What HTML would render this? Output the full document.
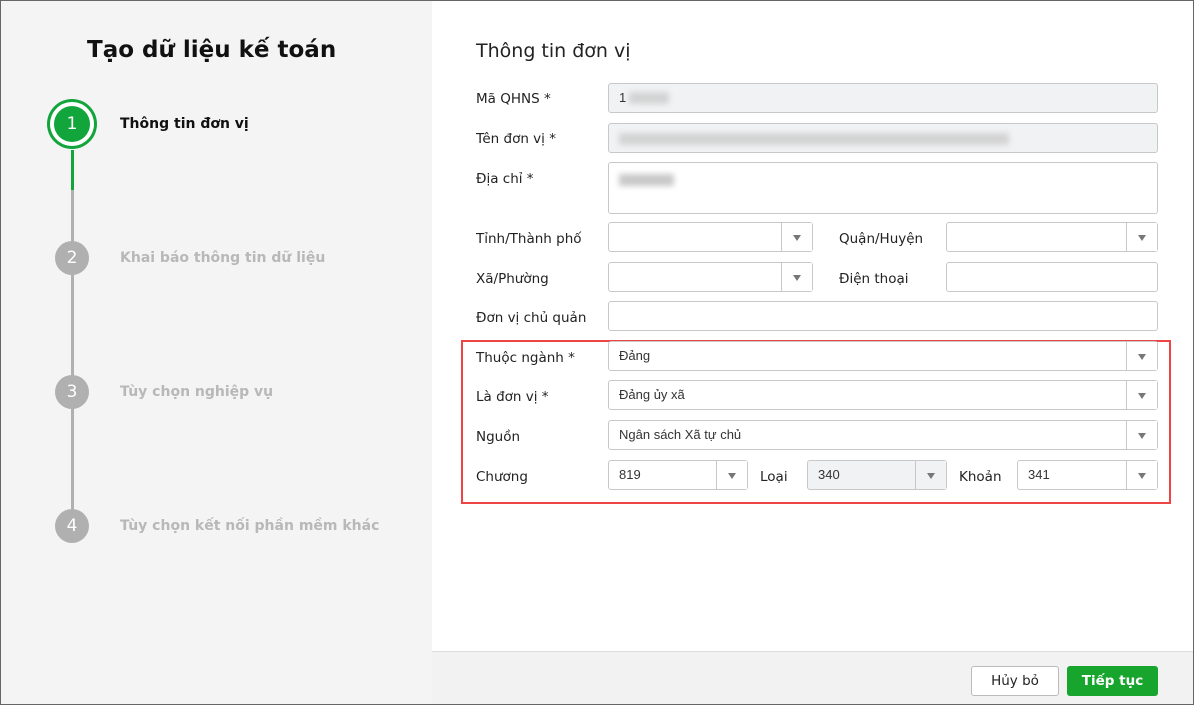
<!DOCTYPE html>
<html><head><meta charset="utf-8"><style>
*{box-sizing:border-box;margin:0;padding:0}
body{width:1194px;height:705px;overflow:hidden;font-family:"DejaVu Sans","Liberation Sans",sans-serif;background:#fff;position:relative}
.frame{position:absolute;left:0;top:0;width:1194px;height:705px;border:1px solid #666;z-index:10;pointer-events:none}
.left{position:absolute;left:0;top:0;width:432px;height:705px;background:#f4f4f4}
.a{position:absolute}
.title{left:87px;top:37px;font-size:23px;font-weight:bold;color:#111}
.c{position:absolute;border-radius:50%;color:#fff;text-align:center;font-size:17px}
.g{width:34px;height:34px;line-height:34px;background:#b0b0b0}
.st{position:absolute;left:120px;font-size:14px;font-weight:bold;color:#b8b8b8}
.lb{position:absolute;left:476px;font-size:13.5px;color:#222}
.in{position:absolute;border:1px solid #c8c8c8;border-radius:3px;background:#fff;font-size:13px;color:#333;padding:0 10px;line-height:28px;height:30px;font-family:"Liberation Sans",sans-serif}
.ro{background:#f1f2f4}
.dd::after{content:"";position:absolute;right:0;top:0;width:30px;height:28px;border-left:1px solid #c8c8c8;background:#fff}
.dd i{position:absolute;right:11px;top:12px;border-left:4px solid transparent;border-right:4px solid transparent;border-top:6px solid #777;z-index:2}
.ro.dd::after{background:#f1f2f4}
.blur{position:absolute;height:12px;background:#ccc;filter:blur(3px);opacity:.8}
</style></head><body>
<div class="frame"></div>
<div class="left"></div>
<div class="a title">Tạo dữ liệu kế toán</div>
<div class="a" style="left:71px;top:150px;width:3px;height:40px;background:#12a53c"></div>
<div class="a" style="left:71px;top:190px;width:3px;height:336px;background:#b0b0b0"></div>
<div class="c" style="left:47px;top:99px;width:50px;height:50px;background:#12a53c;"></div>
<div class="c" style="left:50px;top:102px;width:44px;height:44px;background:#fff"></div>
<div class="c" style="left:54px;top:106px;width:36px;height:36px;line-height:36px;background:#12a53c">1</div>
<div class="st" style="top:116px;color:#111">Thông tin đơn vị</div>
<div class="c g" style="left:55px;top:241px">2</div>
<div class="st" style="top:250px">Khai báo thông tin dữ liệu</div>
<div class="c g" style="left:55px;top:375px">3</div>
<div class="st" style="top:384px">Tùy chọn nghiệp vụ</div>
<div class="c g" style="left:55px;top:509px">4</div>
<div class="st" style="top:518px">Tùy chọn kết nối phần mềm khác</div>

<div class="a" style="left:476px;top:40px;font-size:19px;color:#222">Thông tin đơn vị</div>

<div class="lb" style="top:91px">Mã QHNS *</div>
<div class="in ro" style="left:608px;top:83px;width:550px">1<span class="blur" style="left:20px;top:8px;width:40px"></span></div>
<div class="lb" style="top:131px">Tên đơn vị *</div>
<div class="in ro" style="left:608px;top:123px;width:550px"><span class="blur" style="left:10px;top:9px;width:390px"></span></div>
<div class="lb" style="top:171px">Địa chỉ *</div>
<div class="in" style="left:608px;top:162px;width:550px;height:52px"><span class="blur" style="left:10px;top:11px;width:55px;background:#bbb"></span></div>
<div class="lb" style="top:231px">Tỉnh/Thành phố</div>
<div class="in dd" style="left:608px;top:222px;width:205px"><i></i></div>
<div class="lb" style="left:839px;top:231px">Quận/Huyện</div>
<div class="in dd" style="left:946px;top:222px;width:212px"><i></i></div>
<div class="lb" style="top:271px">Xã/Phường</div>
<div class="in dd" style="left:608px;top:262px;width:205px"><i></i></div>
<div class="lb" style="left:839px;top:271px">Điện thoại</div>
<div class="in" style="left:946px;top:262px;width:212px"></div>
<div class="lb" style="top:310px">Đơn vị chủ quản</div>
<div class="in" style="left:608px;top:301px;width:550px"></div>

<div class="a" style="left:461px;top:340px;width:710px;height:164px;border:2px solid #ef4444"></div>
<div class="lb" style="top:350px">Thuộc ngành *</div>
<div class="in dd" style="left:608px;top:341px;width:550px">Đảng<i></i></div>
<div class="lb" style="top:389px">Là đơn vị *</div>
<div class="in dd" style="left:608px;top:380px;width:550px">Đảng ủy xã<i></i></div>
<div class="lb" style="top:429px">Nguồn</div>
<div class="in dd" style="left:608px;top:420px;width:550px">Ngân sách Xã tự chủ<i></i></div>
<div class="lb" style="top:469px">Chương</div>
<div class="in dd" style="left:608px;top:460px;width:140px">819<i></i></div>
<div class="lb" style="left:760px;top:469px">Loại</div>
<div class="in dd ro" style="left:807px;top:460px;width:140px">340<i></i></div>
<div class="lb" style="left:959px;top:469px">Khoản</div>
<div class="in dd" style="left:1017px;top:460px;width:141px">341<i></i></div>

<div class="a" style="left:432px;top:651px;width:762px;height:54px;background:#f2f2f2;border-top:1px solid #ddd"></div>
<div class="a" style="left:971px;top:666px;width:88px;height:30px;border:1px solid #bbb;border-radius:3px;background:#fff;text-align:center;line-height:28px;font-size:13.5px;color:#222">Hủy bỏ</div>
<div class="a" style="left:1067px;top:666px;width:91px;height:30px;border-radius:3px;background:#17a52d;text-align:center;line-height:30px;font-size:13.5px;font-weight:bold;color:#fff">Tiếp tục</div>
</body></html>
